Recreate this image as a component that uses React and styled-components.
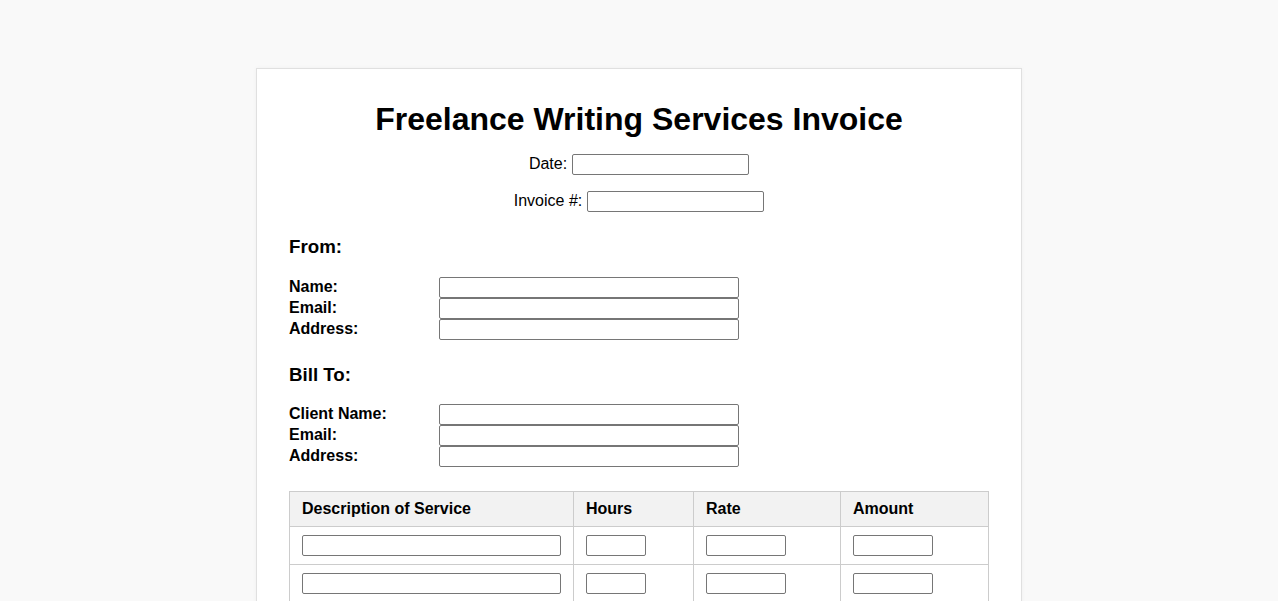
import React from "react";
import styled, { createGlobalStyle } from "styled-components";

const Global = createGlobalStyle`
  html, body { margin: 0; padding: 0; }
  body {
    background: #f9f9f9;
    font-family: "Liberation Sans", Arial, sans-serif;
    color: #000;
    padding: 8px 0;
  }
`;

const Page = styled.div`
  box-sizing: content-box;
  width: 700px;
  margin: 60px auto 40px;
  padding: 32px;
  background: #fff;
  border: 1px solid #e0e0e0;
  box-shadow: 0 0 4px rgba(0, 0, 0, 0.04);
`;

const Title = styled.h1`
  margin: 0 0 16px;
  font-size: 32px;
  line-height: 37px;
  font-weight: bold;
  text-align: center;
`;

const MetaLine = styled.div`
  display: flex;
  justify-content: center;
  align-items: center;
  gap: 5px;
  height: 21px;
  margin: 0 0 16px;
  font-size: 16px;
  line-height: 21px;
`;

const MetaLabel = styled.span`
  padding-bottom: 2px;
`;

const Field = styled.input`
  display: block;
  box-sizing: border-box;
  width: ${(p) => p.$w || 177}px;
  height: 21px;
  padding: 1px 2px;
  border: 1px solid #767676;
  border-radius: 2px;
  background: #fff;
  font-family: "Liberation Sans", Arial, sans-serif;
  font-size: 13px;
`;

const SectionTitle = styled.h3`
  margin: ${(p) => p.$top || 0}px 0 0;
  font-size: 18.72px;
  line-height: 22px;
  font-weight: bold;
`;

const FieldGrid = styled.div`
  display: grid;
  grid-template-columns: 150px 300px;
  grid-auto-rows: 21px;
  margin-top: ${(p) => p.$top || 20}px;
`;

const Label = styled.label`
  font-size: 16px;
  font-weight: bold;
  line-height: 19px;
`;

const Table = styled.table`
  width: 699px;
  margin-top: 24px;
  border-collapse: collapse;
  table-layout: fixed;
  font-size: 16px;
`;

const Th = styled.th`
  background: #f2f2f2;
  border: 1px solid #cccccc;
  padding: 8px 12px;
  text-align: left;
  font-weight: bold;
  line-height: 18px;
`;

const Td = styled.td`
  border: 1px solid #cccccc;
  padding: 8px 12px;
  line-height: 0;
`;

const fromFields = ["Name:", "Email:", "Address:"];
const billFields = ["Client Name:", "Email:", "Address:"];
const cols = [
  { title: "Description of Service", w: 284, input: 259 },
  { title: "Hours", w: 120, input: 60 },
  { title: "Rate", w: 147, input: 80 },
  { title: "Amount", w: 148, input: 80 },
];

function Fields({ items, top }) {
  return (
    <FieldGrid $top={top}>
      {items.map((l) => (
        <React.Fragment key={l}>
          <Label>{l}</Label>
          <Field $w={300} type="text" />
        </React.Fragment>
      ))}
    </FieldGrid>
  );
}

export default function App() {
  return (
    <>
      <Global />
      <Page>
        <Title>Freelance Writing Services Invoice</Title>
        <MetaLine>
          <MetaLabel>Date:</MetaLabel>
          <Field type="text" />
        </MetaLine>
        <MetaLine>
          <MetaLabel>Invoice #:</MetaLabel>
          <Field type="text" />
        </MetaLine>
        <SectionTitle $top={24}>From:</SectionTitle>
        <Fields items={fromFields} top={19} />
        <SectionTitle $top={24}>Bill To:</SectionTitle>
        <Fields items={billFields} top={18} />
        <Table>
          <colgroup>
            {cols.map((c) => (
              <col key={c.title} style={{ width: c.w }} />
            ))}
          </colgroup>
          <thead>
            <tr>
              {cols.map((c) => (
                <Th key={c.title}>{c.title}</Th>
              ))}
            </tr>
          </thead>
          <tbody>
            {[0, 1, 2, 3].map((r) => (
              <tr key={r}>
                {cols.map((c) => (
                  <Td key={c.title}>
                    <Field $w={c.input} type="text" />
                  </Td>
                ))}
              </tr>
            ))}
          </tbody>
        </Table>
      </Page>
    </>
  );
}
